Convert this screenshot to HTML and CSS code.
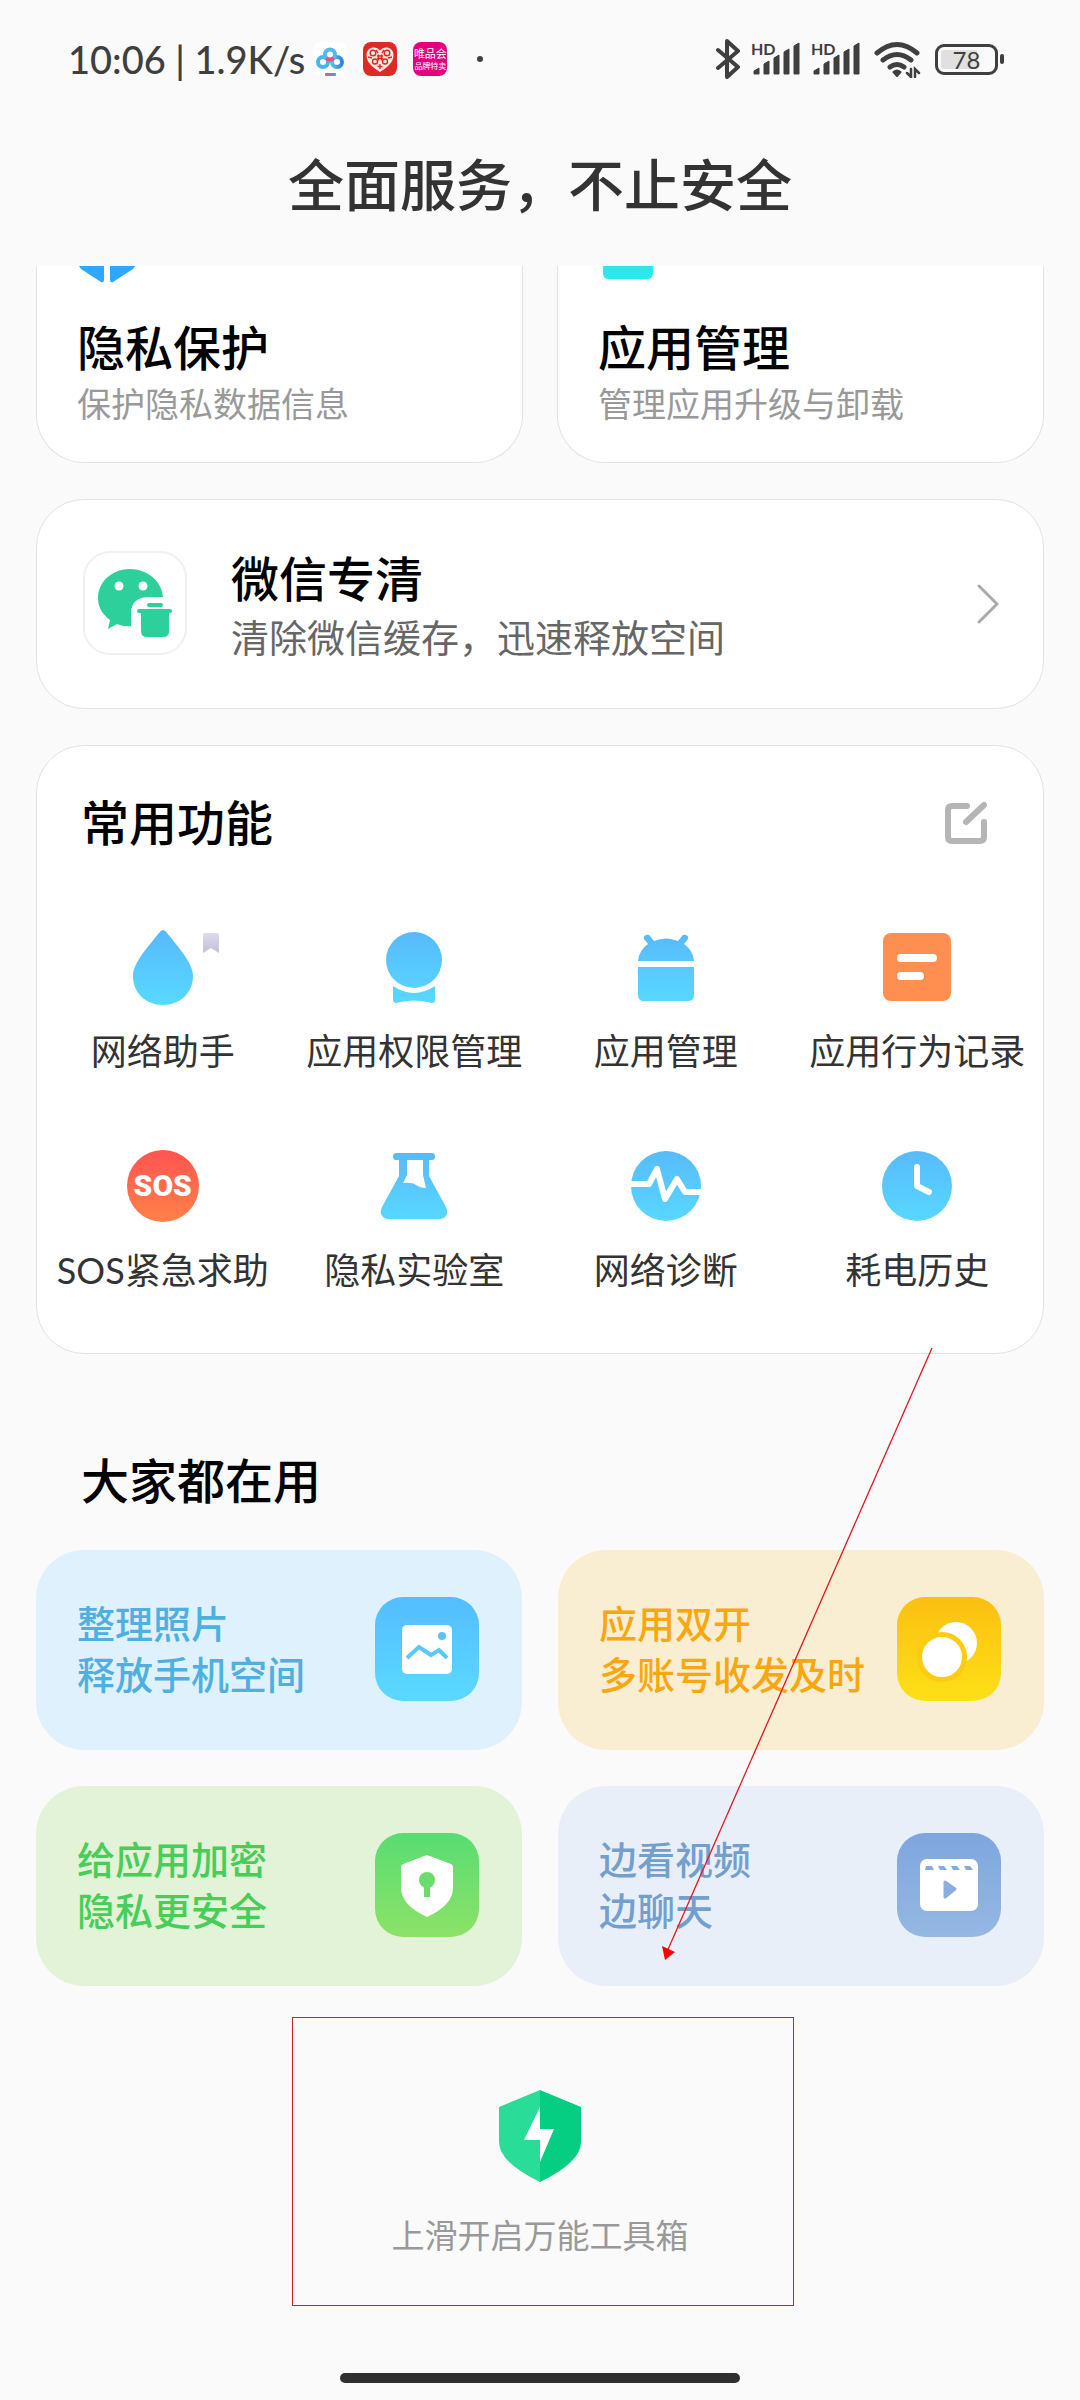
FILE: index.html
```html
<!DOCTYPE html>
<html lang="zh-CN">
<head>
<meta charset="utf-8">
<meta name="viewport" content="width=device-width, initial-scale=1">
<title>手机管家</title>
<link rel="stylesheet" href="styles.css">
</head>
<body>
<!-- Gradients shared by the icons -->
<svg class="defs" width="0" height="0" aria-hidden="true">
  <defs>
    <linearGradient id="blue" x1="0" y1="0" x2="0" y2="1"><stop offset="0" stop-color="#57bbfb"/><stop offset="1" stop-color="#58d7ff"/></linearGradient>
    <linearGradient id="blueTall" gradientUnits="userSpaceOnUse" x1="0" y1="0" x2="0" y2="76"><stop offset="0" stop-color="#57b8fb"/><stop offset="1" stop-color="#58d9ff"/></linearGradient>
    <linearGradient id="flag" x1="0" y1="0" x2="0" y2="1"><stop offset="0" stop-color="#dcdcec"/><stop offset="1" stop-color="#c3bfd6"/></linearGradient>
    <linearGradient id="cloud" x1="0" y1="0" x2="1" y2="0"><stop offset="0" stop-color="#4fc3f0"/><stop offset="1" stop-color="#2f86dc"/></linearGradient>
    <linearGradient id="cloudBar" x1="0" y1="0" x2="1" y2="0"><stop offset="0" stop-color="#f0507c"/><stop offset="1" stop-color="#3da0ea"/></linearGradient>
  </defs>
</svg>

<div class="status">
  <div class="status-side">
    <span class="clock">10:06 | 1.9K/s</span>
    <svg class="app app-cloud" viewBox="0 0 34 34" width="34" height="34">
      <rect width="34" height="34" rx="8" fill="#fff"/>
      <g fill="none" stroke-width="4">
        <circle cx="10" cy="20" r="5" stroke="#43b8ec"/>
        <circle cx="24" cy="20" r="5" stroke="url(#cloud)"/>
        <circle cx="17" cy="12.500" r="5" stroke="#54b9ec"/>
        <path d="M13 16a5 5 0 0 0 7.500 0" stroke="#f0507c"/>
      </g>
      <rect x="12" y="31" width="11" height="3" rx="1" fill="url(#cloudBar)"/>
    </svg>
    <svg class="app" viewBox="0 0 34 34" width="34" height="34">
      <rect width="34" height="34" rx="8" fill="#dc2b25"/>
      <path d="M17 30C9 25 3.500 20 3.500 13C3.500 5 13 3 17 8.500C21 3 30.500 5 30.500 13C30.500 20 25 25 17 30Z" fill="#fde9e2"/>
      <g fill="none" stroke="#dc2b25" stroke-width="1.400">
        <circle cx="10" cy="11" r="2.800"/><circle cx="24" cy="11" r="2.800"/><circle cx="12" cy="19.500" r="2.500"/><circle cx="22" cy="19.500" r="2.500"/>
        <path d="M14 14h6M14 16.500h6M15.500 12.500v6M18.500 12.500v6M17 22v5M14.500 24.500h5M5 15l4 1M29 15l-4 1M13 8l2 3M21 8l-2 3"/>
      </g>
    </svg>
    <span class="app vip"><span class="vip-name">唯品会</span><span class="vip-sub">品牌特卖</span></span>
    <span class="more"></span>
  </div>
  <div class="status-side">
    <svg viewBox="0 0 26 40" width="26" height="40" fill="none" stroke="#3f3f3f" stroke-width="4" stroke-linecap="round" stroke-linejoin="round"><path d="M3 11l20 17-11 10V2l11 10L3 29"/></svg>
    <span class="signal"><span class="hd">HD</span>
      <svg viewBox="0 0 50 34" width="50" height="34" fill="#3f3f3f"><path d="M3 32v-3l5-3v6zM13 32V22l5-3v13zM23 32V16l5-3v19zM33 32V10l5-3v25zM43 32V4l5-3v31z" stroke="#3f3f3f" stroke-linejoin="round"/></svg></span>
    <span class="signal"><span class="hd">HD</span>
      <svg viewBox="0 0 50 34" width="50" height="34" fill="#3f3f3f"><path d="M3 32v-3l5-3v6zM13 32V22l5-3v13zM23 32V16l5-3v19zM33 32V10l5-3v25zM43 32V4l5-3v31z" stroke="#3f3f3f" stroke-linejoin="round"/></svg></span>
    <svg class="wifi" viewBox="0 0 48 38" width="48" height="38" fill="none" stroke="#3f3f3f" stroke-width="5" stroke-linecap="round">
      <path d="M4 13q20-17 40 0M10 20q14-11 28 0M17 27q7-5 14 0"/>
      <path d="M20.500 32q3.500-3 7 0l-3.500 4z" fill="#3f3f3f" stroke-width="2" stroke-linejoin="round"/>
      <path d="M38 29v8l-4-4M42 37v-8l4 4" stroke-width="2.500"/>
    </svg>
    <span class="battery">78</span>
  </div>
</div>

<header class="top"><h1>全面服务，不止安全</h1></header>

<main>
  <div class="pair">
    <a class="card feature" href="#">
      <svg class="feature-icon" viewBox="0 0 60 52" width="60" height="52"><path d="M2 0h25v14q0 3-3 2L4 3zM33 0h25l-2 3-20 13q-3 1-3-2z" fill="#2fa8fb"/></svg>
      <strong>隐私保护</strong><span>保护隐私数据信息</span>
    </a>
    <a class="card feature" href="#">
      <svg class="feature-icon" viewBox="0 0 60 52" width="60" height="52"><path d="M5 0h50v7q0 6-6 6H11q-6 0-6-6z" fill="#2fe6ee"/></svg>
      <strong>应用管理</strong><span>管理应用升级与卸载</span>
    </a>
  </div>

  <a class="card wechat" href="#">
    <svg class="wechat-icon" viewBox="0 0 104 104" width="104" height="104">
      <rect x="1" y="1" width="102" height="102" rx="26" fill="#fff" stroke="#f0f0f0" stroke-width="2"/>
      <path d="M48 75q-7 1-14-2l-9 5 2-9C19 63 15 56 15 47C15 31 29 18 47 18C64 18 79 30 80 46H66Q48 46 48 63z" fill="#2dd09b"/>
      <circle cx="36" cy="35" r="4.500" fill="#fff"/><circle cx="60" cy="35" r="4.500" fill="#fff"/>
      <path d="M66 52h12q2 0 2 2t-2 2H66q-2 0-2-2t2-2zM56 58h31q2 0 2 2t-2 2h-1v18q0 6-6 6H64q-6 0-6-6V62h-2q-2 0-2-2t2-2z" fill="#2dd09b"/>
    </svg>
    <span class="wechat-text"><strong>微信专清</strong><span>清除微信缓存，迅速释放空间</span></span>
    <svg class="chevron" viewBox="0 0 24 40" width="24" height="40" fill="none" stroke="#aaa" stroke-width="3" stroke-linecap="round" stroke-linejoin="round"><path d="M3 2l18 18L3 38"/></svg>
  </a>

  <section class="card tools">
    <div class="tools-head">
      <h2>常用功能</h2>
      <button class="edit" type="button" aria-label="编辑">
        <svg viewBox="0 0 44 44" width="44" height="44" fill="none" stroke="#b5b5b5" stroke-width="6" stroke-linecap="round" stroke-linejoin="round"><path d="M23 5H8Q4 5 4 9v27q0 4 4 4h28q4 0 4-4V21M22 21L40 4"/></svg>
      </button>
    </div>
    <div class="tool-grid">
      <button class="tool" type="button">
        <svg viewBox="0 0 76 76" width="76" height="76"><path d="M38 1Q40 1 42 4C54 19 68 34 68 47C68 64 55 76 38 76S8 64 8 47C8 34 22 19 34 4Q36 1 38 1z" fill="url(#blueTall)"/></svg>
        <svg class="mark" viewBox="0 0 16 20" width="16" height="20"><path d="M0 2q0-2 2-2h12q2 0 2 2v18l-8-5-8 5z" fill="url(#flag)"/></svg>
        <span>网络助手</span>
      </button>
      <button class="tool" type="button">
        <svg viewBox="0 0 76 76" width="76" height="76" fill="url(#blueTall)"><circle cx="38" cy="31" r="28"/><path d="M17 57q21 14 42 0v14q0 3-3 3-18-5-36 0-3 0-3-3z"/></svg>
        <span>应用权限管理</span>
      </button>
      <button class="tool" type="button">
        <svg viewBox="0 0 76 76" width="76" height="76" fill="url(#blueTall)"><path d="M10 32Q11 21 20 15l-4-5q-1-3 2-4t4 1l4 5q12-5 24 0l4-5q1-2 4-1t2 4l-4 5q9 6 10 17zM10 38h56v28q0 6-6 6H16q-6 0-6-6z"/></svg>
        <span>应用管理</span>
      </button>
      <button class="tool" type="button">
        <svg viewBox="0 0 76 76" width="76" height="76"><rect x="4" y="4" width="68" height="68" rx="8" fill="#ff8f50"/><path d="M22 29h32M22 47h19" stroke="#fff" stroke-width="8" stroke-linecap="round"/></svg>
        <span>应用行为记录</span>
      </button>
      <button class="tool" type="button">
        <span class="sos">SOS</span>
        <span>SOS紧急求助</span>
      </button>
      <button class="tool" type="button">
        <svg viewBox="0 0 76 76" width="76" height="76" fill="url(#blueTall)"><path fill-rule="evenodd" d="M20 5h36q3 0 3 3.500T56 12h-3v16l17 31q3 6-1 10-2 2-5 2H12q-3 0-5-2-4-4-1-10l17-31V12h-3q-3 0-3-3.500T20 5zM31 12v15l-4 8q9-1 13 2t10 3l-3-13V12z"/></svg>
        <span>隐私实验室</span>
      </button>
      <button class="tool" type="button">
        <svg viewBox="0 0 76 76" width="76" height="76"><circle cx="38" cy="38" r="35" fill="url(#blue)"/><path d="M2 36h19l8-15 8 30 12-20 8 13h19" fill="none" stroke="#fff" stroke-width="6" stroke-linejoin="round"/></svg>
        <span>网络诊断</span>
      </button>
      <button class="tool" type="button">
        <svg viewBox="0 0 76 76" width="76" height="76"><circle cx="38" cy="38" r="35" fill="url(#blue)"/><path d="M38 19v19l12 6" fill="none" stroke="#fff" stroke-width="6" stroke-linecap="round" stroke-linejoin="round"/></svg>
        <span>耗电历史</span>
      </button>
    </div>
  </section>

  <section class="popular">
    <h2>大家都在用</h2>
    <div class="tiles">
      <a class="tile tile-blue" href="#"><span>整理照片<br>释放手机空间</span>
        <svg class="tile-icon" viewBox="0 0 104 104" width="104" height="104"><rect x="27" y="28" width="50" height="49" rx="5" fill="#fff"/><circle cx="67" cy="39" r="4" fill="#5ac4fa"/><path d="M32 61l12-11 12 8 8-5 8 8" fill="none" stroke="#5ac8fa" stroke-width="4"/></svg>
      </a>
      <a class="tile tile-yellow" href="#"><span>应用双开<br>多账号收发及时</span>
        <svg class="tile-icon" viewBox="0 0 104 104" width="104" height="104"><circle cx="59" cy="46" r="21" fill="#fff"/><circle cx="45" cy="60" r="22.500" fill="#fff" stroke="#fccb12" stroke-width="5"/></svg>
      </a>
      <a class="tile tile-green" href="#"><span>给应用加密<br>隐私更安全</span>
        <svg class="tile-icon" viewBox="0 0 104 104" width="104" height="104"><path d="M52 22l24 9q2 1 2 3v21q0 17-26 29Q26 72 26 55V34q0-2 2-3z" fill="#fff"/><circle cx="52" cy="47" r="8" fill="#6bdb6c"/><path d="M52 50v14" stroke="#6bdb6c" stroke-width="6"/></svg>
      </a>
      <a class="tile tile-slate" href="#"><span>边看视频<br>边聊天</span>
        <svg class="tile-icon" viewBox="0 0 104 104" width="104" height="104"><rect x="23" y="26" width="58" height="52" rx="7" fill="#fff"/><path d="M29 33h6l2 4h-9zM41 33h6l3 4h-7zM54 33h6l3 4h-7zM67 33h6l3 4h-7z" fill="#85a9de"/><path d="M48 49l10 7-10 8z" fill="#8aaee0" stroke="#8aaee0" stroke-width="3" stroke-linejoin="round"/></svg>
      </a>
    </div>
    <svg class="pointer" viewBox="0 0 272 614" width="272" height="614"><path d="M271 1L5 607" stroke="#e01824" stroke-width="1.300" fill="none"/><path d="M1 599l13 6-10 8z" fill="#f00"/></svg>
  </section>
</main>

<footer class="swipe">
  <div class="highlight"></div>
  <svg viewBox="0 0 82 94" width="82" height="94"><path d="M41 1v92Q0 73 0 53V18z" fill="#29dc98"/><path d="M41 1v92Q82 73 82 53V18z" fill="#05cd81"/><path d="M41 18v22h14L41 73V51H25z" fill="#fff"/></svg>
  <p>上滑开启万能工具箱</p>
  <div class="home-bar"></div>
</footer>
</body>
</html>
```
FILE: styles.css
```css
* { box-sizing: border-box; }

body {
  margin: 0;
  min-height: 100vh;
  display: flex;
  flex-direction: column;
  background: #fafafa;
  color: #000;
  font-family: Lato, "Noto Sans CJK SC", sans-serif;
}

a { color: inherit; text-decoration: none; }
button { padding: 0; border: 0; background: none; font: inherit; color: inherit; cursor: pointer; }
svg { display: block; flex: none; }
h1, h2, p { margin: 0; }
h1, h2, strong { font-weight: 500; }
.defs { position: absolute; }

/* Status bar */
.status {
  display: flex;
  justify-content: space-between;
  height: 118px;
  padding: 0 76px 0 68px;
  color: #3f3f3f;
}
.status-side { display: flex; align-items: center; }
.clock { font-size: 38px; line-height: 48px; font-weight: 500; white-space: pre; }
.app { margin-right: 16px; }
.app-cloud { margin-left: 8px; }
.vip {
  display: flex;
  flex-direction: column;
  align-items: center;
  justify-content: center;
  width: 34px;
  height: 34px;
  border-radius: 8px;
  background: #e5007f;
  color: #fff;
  overflow: hidden;
}
.vip-name { font-size: 11px; line-height: 14px; }
.vip-sub { font-size: 8px; line-height: 10px; }
.more { width: 6px; height: 6px; margin-left: 14px; border-radius: 50%; background: #3f3f3f; }
.signal { position: relative; margin-left: 10px; }
.hd { position: absolute; left: 0; top: -3px; font-size: 16px; line-height: 20px; font-weight: 700; }
.wifi { margin-left: 12px; }
.battery {
  position: relative;
  width: 63px;
  height: 31px;
  margin: 0 6px 0 14px;
  border: 3px solid #3f3f3f;
  border-radius: 9px;
  background: linear-gradient(90deg, #e0e0e0 70%, #fafafa 70%) content-box;
  padding: 3px;
  font-size: 24px;
  line-height: 19px;
  text-align: center;
}
.battery::after {
  content: "";
  position: absolute;
  right: -9px;
  top: 7px;
  width: 4px;
  height: 10px;
  border-radius: 2px;
  background: #3f3f3f;
}

.top { padding: 33px 36px 47px; text-align: center; }
.top h1 { font-size: 56px; line-height: 68px; color: #333; }

main { display: flex; flex-direction: column; gap: 36px; padding: 0 36px; }
h2, strong { font-size: 48px; line-height: 60px; }

.card { border: 1px solid #e2e2e2; border-radius: 48px; background: #fff; }

/* Feature cards, scrolled under the title */
.pair { display: grid; grid-template-columns: 1fr 1fr; gap: 34px; }
.feature {
  display: flex;
  flex-direction: column;
  padding: 0 40px 36px;
  border-top: 0;
  border-radius: 0 0 48px 48px;
}
.feature span { margin-top: 4px; font-size: 34px; line-height: 44px; color: #999; }

.wechat { display: flex; align-items: flex-start; padding: 49px 43px 43px 46px; }
.wechat-icon { margin-top: 2px; }
.wechat-text { flex: 1; display: flex; flex-direction: column; margin-left: 44px; }
.wechat-text span { font-size: 38px; line-height: 56px; color: #666; }
.chevron { align-self: center; margin-bottom: 6px; }

/* Common functions */
.tools { padding: 47px 0 61px; }
.tools-head { display: flex; justify-content: space-between; align-items: center; padding: 0 55px 0 44px; }
.tool-grid { display: grid; grid-template-columns: repeat(4, 1fr); gap: 75px 0; margin-top: 76px; }
.tool {
  position: relative;
  display: flex;
  flex-direction: column;
  align-items: center;
  gap: 24px;
  font-size: 36px;
  line-height: 44px;
  color: #333;
  white-space: nowrap;
}
.mark { position: absolute; left: calc(50% + 40px); top: 4px; }
.sos {
  width: 72px;
  height: 72px;
  margin: 2px 0;
  border-radius: 50%;
  background: linear-gradient(#ff5450, #ff8148);
  color: #fff;
  font-family: "Liberation Sans Narrow", Roboto, sans-serif;
  font-size: 30px;
  line-height: 72px;
  font-weight: 900;
}

/* Popular tiles */
.popular { position: relative; padding-top: 61px; }
.popular h2 { margin: 0 0 39px 45px; }
.tiles { display: grid; grid-template-columns: 1fr 1fr; gap: 36px; }
.tile {
  display: flex;
  align-items: center;
  justify-content: space-between;
  padding: 48px 43px 50px 41px;
  border-radius: 48px;
  font-size: 38px;
  line-height: 51px;
  font-weight: 500;
  white-space: nowrap;
}
.tile-icon { margin: -2px 0; border-radius: 28px; }
.tile-blue { background: #dff1fc; color: #4fb0e0; }
.tile-blue .tile-icon { background: linear-gradient(#54bdff, #5ad9ff); }
.tile-yellow { background: #faeed2; color: #f9a70e; }
.tile-yellow .tile-icon { background: linear-gradient(#fbbf12, #fde016); }
.tile-green { background: #e3f3d7; color: #47ce58; }
.tile-green .tile-icon { background: linear-gradient(#58dc72, #8de268); }
.tile-slate { background: #e9eff9; color: #739fcd; }
.tile-slate .tile-icon { background: linear-gradient(#7ea6df, #95b8e2); }
.pointer { position: absolute; right: 111px; bottom: 25px; pointer-events: none; }

/* Pull-up hint */
.swipe {
  position: relative;
  flex: 1;
  display: flex;
  flex-direction: column;
  align-items: center;
  padding: 103px 0 17px;
}
.swipe p { margin-top: 30px; font-size: 33px; line-height: 44px; color: #999; }
.highlight {
  position: absolute;
  left: 27%;
  top: 31px;
  width: 502px;
  height: 289px;
  border: 1px solid #c9202e;
}
.home-bar { width: 37%; height: 10px; margin-top: auto; border-radius: 5px; background: #2f2f2f; }
```
